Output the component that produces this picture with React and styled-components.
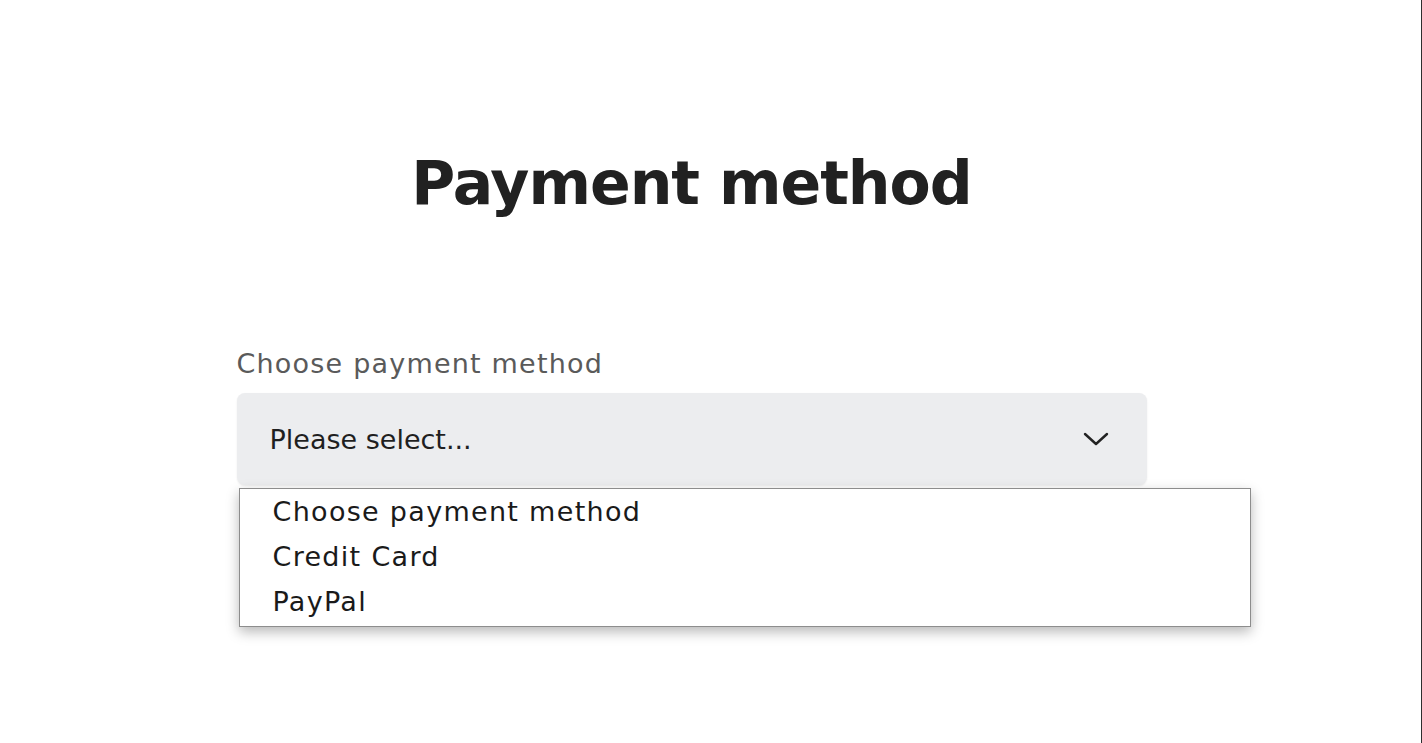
import { createGlobalStyle, styled } from "styled-components";

const GlobalStyle = createGlobalStyle`
  html, body {
    margin: 0;
    padding: 0;
    background: #fff;
  }
  body {
    font-family: "DejaVu Sans", "Noto Sans", sans-serif;
    color: #212121;
  }
`;

const Page = styled.div`
  box-sizing: border-box;
  min-height: 100vh;
  border-right: 1px solid #2e2e2e;
  padding: 0 38px 0 0;
`;

const Container = styled.main`
  width: 910px;
  margin: 0 auto;
  padding-top: 140px;
`;

const Title = styled.h1`
  margin: 0;
  text-align: center;
  font-size: 60px;
  line-height: 86px;
  font-weight: 700;
  letter-spacing: -1px;
  color: #212121;
`;

const Field = styled.div`
  margin-top: 122px;
  display: flex;
  flex-direction: column;
  gap: 13px;
`;

const Label = styled.label`
  font-size: 27px;
  line-height: 32px;
  letter-spacing: 1.2px;
  color: #5a5a5a;
`;

const SelectWrap = styled.div`
  position: relative;
`;

const SelectBox = styled.div`
  box-sizing: border-box;
  height: 92px;
  display: flex;
  align-items: center;
  justify-content: space-between;
  padding: 0 38px 0 33px;
  background: #ecedef;
  border-radius: 8px;
  box-shadow: 0 1px 2px rgba(0, 0, 0, 0.08);
  font-size: 27px;
  color: #1f1f1f;
`;

const Chevron = () => (
  <svg width="26" height="16" viewBox="0 0 26 16" fill="none">
    <polyline
      points="2,3 13,13 24,3"
      stroke="#222"
      strokeWidth="2.4"
      strokeLinecap="round"
      strokeLinejoin="round"
    />
  </svg>
);

const Listbox = styled.ul`
  position: absolute;
  top: 95px;
  left: 2px;
  box-sizing: border-box;
  width: 1012px;
  margin: 0;
  padding: 0 0 2px;
  list-style: none;
  background: #fff;
  border: 1px solid #8d8d8d;
  box-shadow: 0 5px 12px rgba(0, 0, 0, 0.28);
`;

const Option = styled.li`
  height: 45px;
  line-height: 45px;
  padding-left: 33px;
  font-size: 27px;
  letter-spacing: 1.3px;
  color: #1a1a1a;
`;

const options = ["Choose payment method", "Credit Card", "PayPal"];

const App = () => {
  return (
    <Page>
      <GlobalStyle />
      <Container>
        <Title>Payment method</Title>
        <Field>
          <Label>Choose payment method</Label>
          <SelectWrap>
            <SelectBox>
              <span>Please select...</span>
              <Chevron />
            </SelectBox>
            <Listbox>
              {options.map((o) => (
                <Option key={o}>{o}</Option>
              ))}
            </Listbox>
          </SelectWrap>
        </Field>
      </Container>
    </Page>
  );
};

export default App;
